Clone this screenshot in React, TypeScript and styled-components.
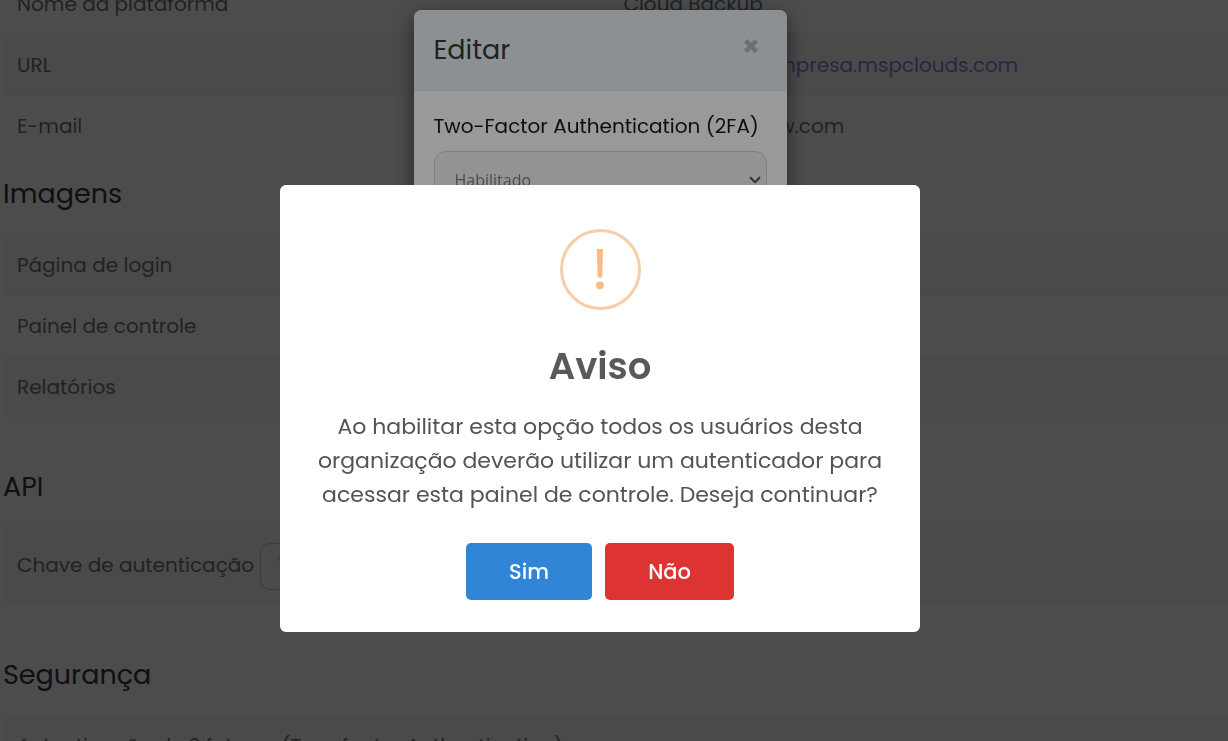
import React from "react";
import styled, { createGlobalStyle } from "styled-components";
import { ChevronUp } from "lucide-react";

const GlobalStyle = createGlobalStyle`
  *, *::before, *::after { box-sizing: border-box; }
  body {
    margin: 0;
    overflow: hidden;
    background: #fff;
    color: #6c757d;
    font-family: Poppins, Inter, sans-serif;
    font-size: 20px;
    font-weight: 400;
    line-height: 30px;
  }
  button, select { font-family: inherit; }
`;

const Page = styled.main`
  height: 100vh;
  overflow: hidden;
  padding-left: 3px;
`;

/* The settings page stays scrolled while the dialogs are open. */
const Scrolled = styled.div`
  margin-top: -27px;
`;

const SectionTitle = styled.h2<{ $first?: boolean }>`
  margin: ${(p) => (p.$first ? 21 : 53)}px 0 23px;
  color: #32363b;
  font-size: 27px;
  font-weight: 400;
  line-height: 34px;
`;

const DataTable = styled.table`
  width: 100%;
  table-layout: fixed;
  border-collapse: collapse;
  border-spacing: 0;
`;

const Row = styled.tr<{ $striped?: boolean }>`
  background: ${(p) => (p.$striped ? "#f8f8f8" : "#fff")};
`;

const Label = styled.th`
  padding: 15px 14px;
  border-top: 1px solid #eff1f2;
  font-weight: 400;
  text-align: left;
  white-space: nowrap;
`;

const Value = styled.td`
  padding: 15px 8px;
  border-top: 1px solid #eff1f2;
  white-space: nowrap;
`;

const Link = styled.a`
  color: #8b80e0;
  text-decoration: none;
`;

const KeyButton = styled.button`
  display: inline-flex;
  align-items: flex-start;
  height: 47px;
  margin-left: 6px;
  padding: 6px 12px;
  border: 1px solid #f0b4b0;
  border-radius: 10px;
  background: transparent;
  color: #e5a19c;
  vertical-align: middle;
`;

const Overlay = styled.div<{ $shade: number; $center?: boolean }>`
  position: fixed;
  inset: 0;
  display: flex;
  justify-content: center;
  align-items: ${(p) => (p.$center ? "center" : "flex-start")};
  padding: ${(p) => (p.$center ? 76 : 10)}px 28px 0 0;
  background: rgba(0, 0, 0, ${(p) => p.$shade});
`;

const EditDialog = styled.section`
  width: 373px;
  overflow: hidden;
  border-radius: 8px;
  background: #fff;
  box-shadow: 0 6px 19px rgba(0, 0, 0, 0.5);
`;

const EditHeader = styled.header`
  display: flex;
  justify-content: space-between;
  align-items: flex-start;
  height: 81px;
  padding: 20px;
  border-bottom: 1px solid #e2e9ef;
  background: #ebf1f5;
`;

const EditTitle = styled.h3`
  margin: 0;
  color: #343a40;
  font-size: 27px;
  font-weight: 400;
  line-height: 40px;
`;

const CloseButton = styled.button`
  display: flex;
  padding: 8px;
  border: 0;
  background: none;
  color: #b6babd;
`;

const EditBody = styled.div`
  display: flex;
  flex-direction: column;
  gap: 10px;
  padding: 20px;
`;

const FieldLabel = styled.label`
  color: #15151f;
  white-space: nowrap;
`;

const SelectBox = styled.div`
  display: grid;
  align-items: center;

  > * {
    grid-area: 1 / 1;
  }

  > svg {
    justify-self: end;
    margin-right: 6px;
    color: #4a5056;
    pointer-events: none;
  }
`;

const Select = styled.select`
  width: 100%;
  height: 58px;
  padding: 0 20px;
  border: 1px solid #d3d6d8;
  border-radius: 12px;
  background: #f4f7f6;
  color: #7a8289;
  appearance: none;
  font-family: "Open Sans", sans-serif;
  font-size: 16px;
`;

const Alert = styled.section`
  display: flex;
  flex-direction: column;
  align-items: center;
  width: 640px;
  padding: 44px 16px 32px;
  border-radius: 6px;
  background: #fff;
  color: #545454;
  text-align: center;
`;

const AlertTitle = styled.h2`
  margin: 28px 0 16px;
  color: #595959;
  font-size: 37px;
  font-weight: 600;
  line-height: 56px;
`;

const AlertText = styled.p`
  margin: 0 0 31px;
  font-size: 22px;
  line-height: 34px;
`;

const Actions = styled.div`
  display: flex;
  gap: 13px;
`;

const ActionButton = styled.button<{ $color: string }>`
  height: 57px;
  padding: 0 43px;
  border: 0;
  border-radius: 5px;
  background: ${(p) => p.$color};
  color: #fff;
  font-size: 21px;
  font-weight: 500;
`;

const WarningIcon = () => (
  <svg width="81" height="81" viewBox="0 0 81 81" aria-hidden="true">
    <circle cx="40.5" cy="40.5" r="39" fill="none" stroke="#f8cda9" strokeWidth="3" />
    <path d="M36.8 20h6.2l-.8 28.5h-4.6z" fill="#f8bb86" />
    <circle cx="39.9" cy="56.3" r="3.9" fill="#f8bb86" />
  </svg>
);

const CloseIcon = () => (
  <svg width="16" height="16" viewBox="0 0 16 16" aria-hidden="true">
    <path d="M2.6 2.6l10.8 10.8M13.4 2.6L2.6 13.4" stroke="currentColor" strokeWidth="4.6" />
  </svg>
);

const SelectArrow = () => (
  <svg width="12" height="8" viewBox="0 0 12 8" aria-hidden="true">
    <path d="M1 1.2l5 5 5-5" fill="none" stroke="currentColor" strokeWidth="2" />
  </svg>
);

export default function App() {
  return (
    <>
      <GlobalStyle />
      <Page>
        <Scrolled>
          <DataTable>
            <tbody>
              <Row>
                <Label scope="row">Nome da plataforma</Label>
                <Value>Cloud Backup</Value>
              </Row>
              <Row $striped>
                <Label scope="row">URL</Label>
                <Value>
                  <Link href="#url">https://minhaempresa.mspclouds.com</Link>
                </Value>
              </Row>
              <Row>
                <Label scope="row">E-mail</Label>
                <Value>contato@mspvw.com</Value>
              </Row>
            </tbody>
          </DataTable>

          <SectionTitle $first>Imagens</SectionTitle>
          <DataTable>
            <tbody>
              <Row $striped>
                <Label scope="row">Página de login</Label>
                <Value />
              </Row>
              <Row>
                <Label scope="row">Painel de controle</Label>
                <Value />
              </Row>
              <Row $striped>
                <Label scope="row">Relatórios</Label>
                <Value />
              </Row>
            </tbody>
          </DataTable>

          <SectionTitle>API</SectionTitle>
          <DataTable>
            <tbody>
              <Row $striped>
                <Label scope="row">
                  Chave de autenticação
                  <KeyButton type="button" aria-label="Gerar chave">
                    <ChevronUp size={16} />
                  </KeyButton>
                </Label>
                <Value />
              </Row>
            </tbody>
          </DataTable>

          <SectionTitle>Segurança</SectionTitle>
          <DataTable>
            <tbody>
              <Row $striped>
                <Label scope="row">Autenticação de 2 fatores (Two-factor Authentication)</Label>
                <Value />
              </Row>
            </tbody>
          </DataTable>
        </Scrolled>
      </Page>

      <Overlay $shade={0.5}>
        <EditDialog role="dialog" aria-labelledby="edit-title">
          <EditHeader>
            <EditTitle id="edit-title">Editar</EditTitle>
            <CloseButton type="button" aria-label="Fechar">
              <CloseIcon />
            </CloseButton>
          </EditHeader>
          <EditBody>
            <FieldLabel htmlFor="two-factor">Two-Factor Authentication (2FA)</FieldLabel>
            <SelectBox>
              <Select id="two-factor" defaultValue="on">
                <option value="on">Habilitado</option>
                <option value="off">Desabilitado</option>
              </Select>
              <SelectArrow />
            </SelectBox>
          </EditBody>
        </EditDialog>
      </Overlay>

      <Overlay $shade={0.4} $center>
        <Alert role="alertdialog" aria-labelledby="alert-title" aria-describedby="alert-text">
          <WarningIcon />
          <AlertTitle id="alert-title">Aviso</AlertTitle>
          <AlertText id="alert-text">
            Ao habilitar esta opção todos os usuários desta organização deverão utilizar um
            autenticador para acessar esta painel de controle. Deseja continuar?
          </AlertText>
          <Actions>
            <ActionButton type="button" $color="#3085d6">
              Sim
            </ActionButton>
            <ActionButton type="button" $color="#dd3333">
              Não
            </ActionButton>
          </Actions>
        </Alert>
      </Overlay>
    </>
  );
}
